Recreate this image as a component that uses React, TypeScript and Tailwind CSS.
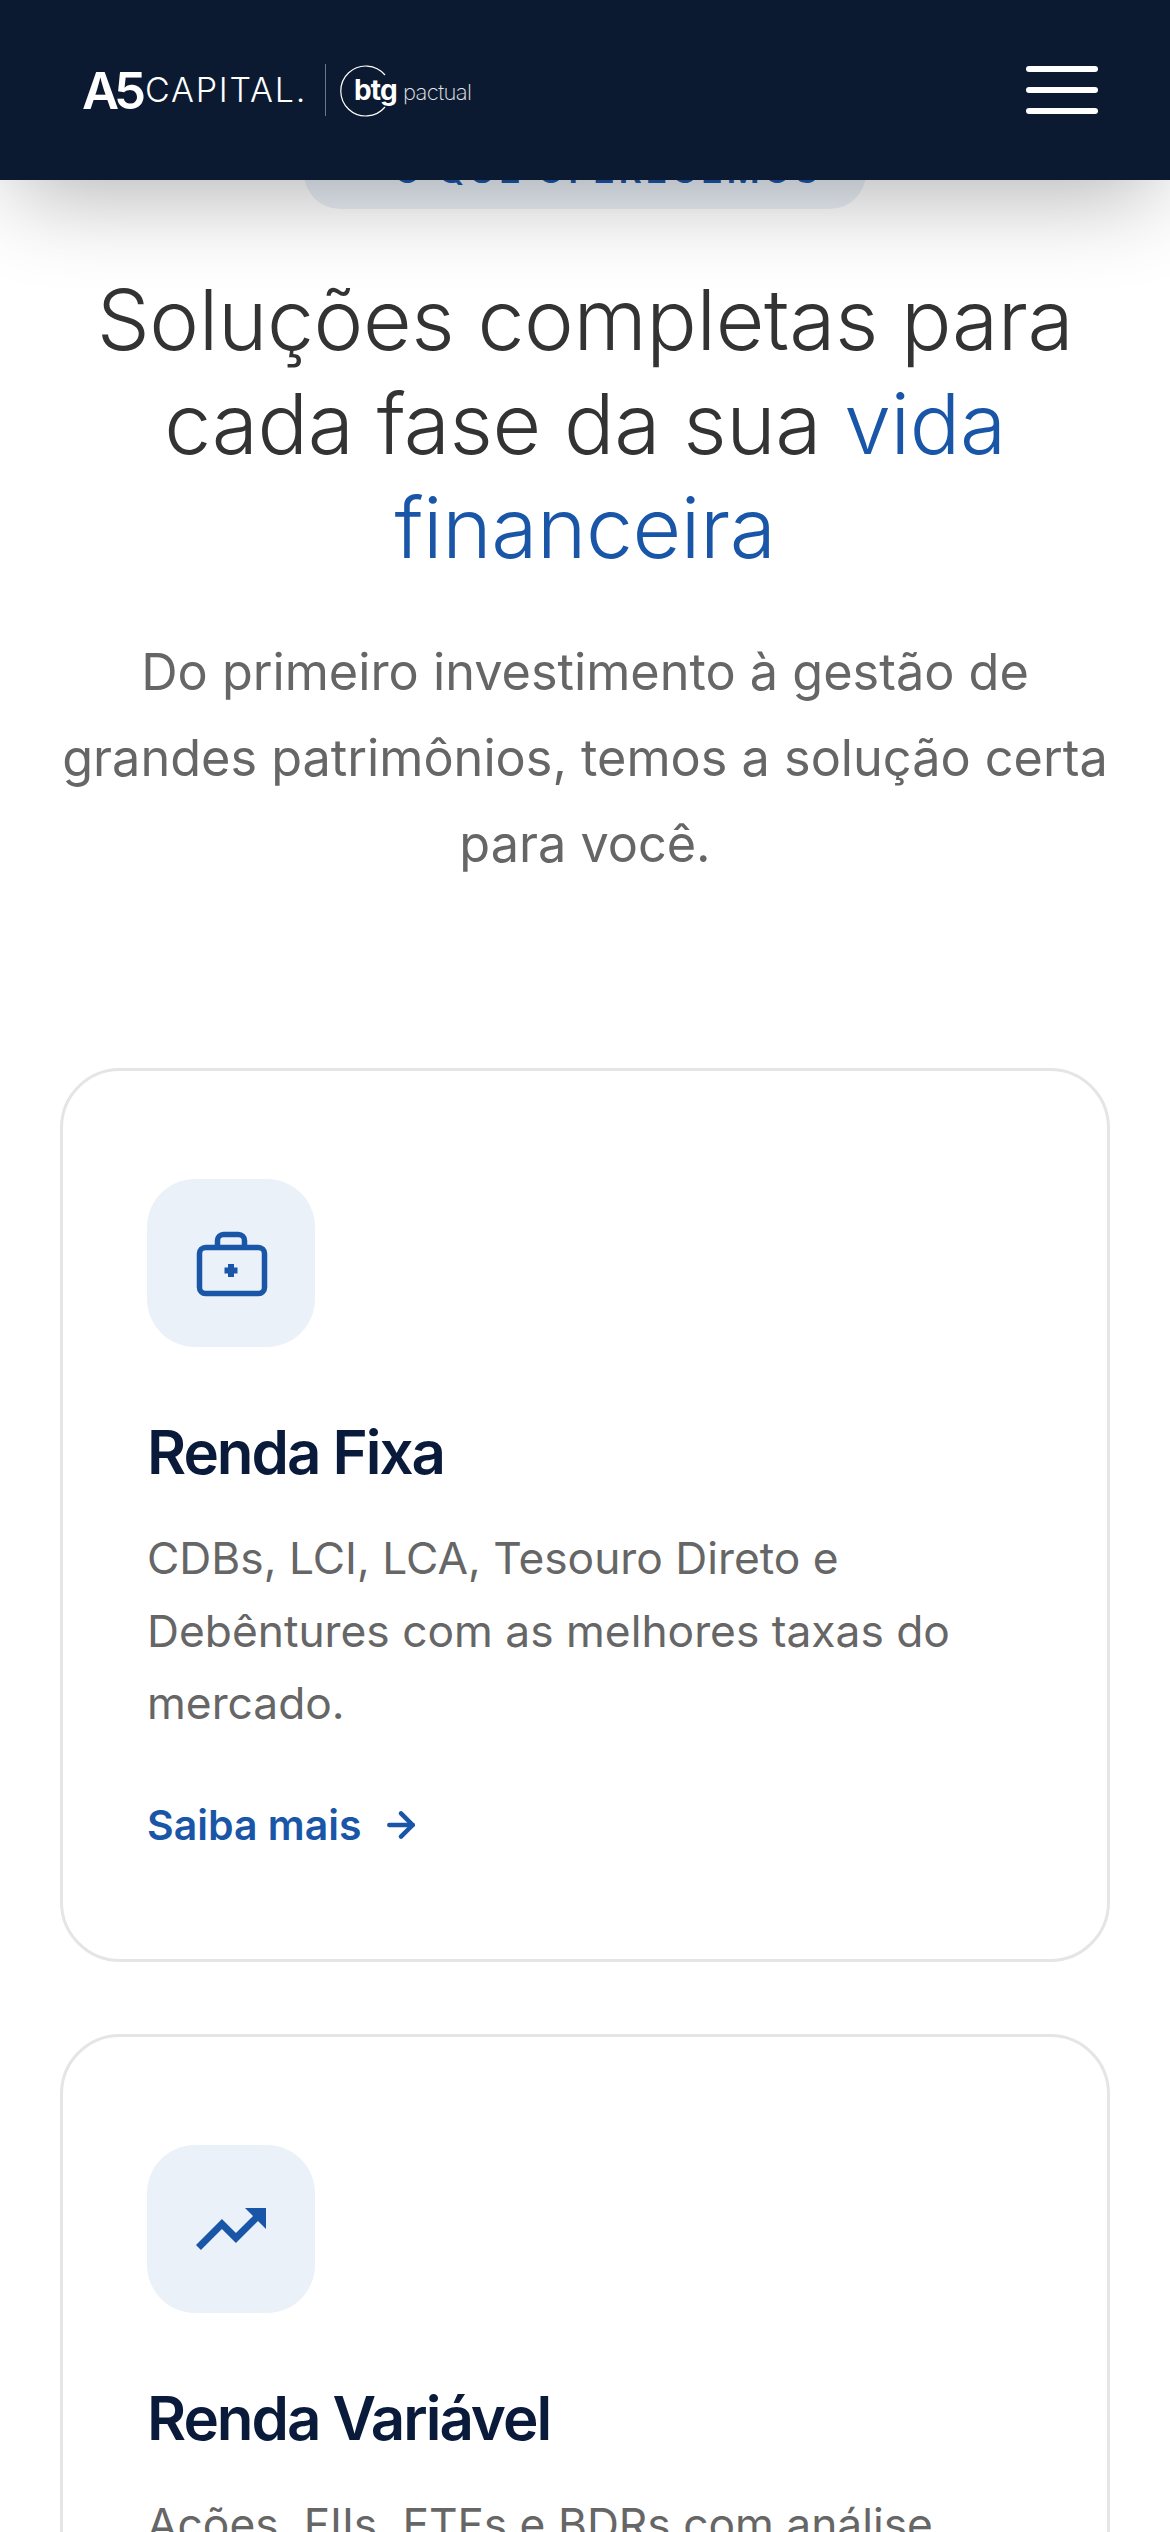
import { ArrowRight } from 'lucide-react';
import { MdTrendingUp } from 'react-icons/md';
import type { ReactNode } from 'react';

function CaseIcon() {
  return (
    <svg width="84" height="84" viewBox="0 0 84 84" fill="none" stroke="#1a56a8" strokeWidth="5.5">
      <rect x="10.5" y="26.5" width="65" height="46" rx="6" />
      <path d="M28.5 26V19.5a6 6 0 0 1 6-6h15a6 6 0 0 1 6 6V26" />
      <path d="M42 43v13M35.5 49.5h13" strokeWidth="6" />
    </svg>
  );
}

function Logo() {
  return (
    <div className="flex items-center text-white font-[Inter,sans-serif]">
      <span className="text-[51px] leading-none font-semibold tracking-[-5px] w-[63px]">A5</span>
      <span className="text-[34px] leading-none font-light tracking-[1.8px] w-[180px]">CAPITAL.</span>
      <span className="w-px h-[52px] bg-white/40" />
      <span className="relative flex items-baseline ml-[28px]">
        <svg className="absolute left-[-14px] top-[-11px]" width="52" height="52" viewBox="0 0 52 52" fill="none" stroke="#ffffff" strokeWidth="1.2">
          <path d="M45 10A25 25 0 1 0 45 42" />
        </svg>
        <span className="text-[28px] leading-none font-bold tracking-[-0.8px]">btg</span>
        <span className="text-[22px] leading-none font-extralight ml-[6px] tracking-[-0.6px] text-white/90">pactual</span>
      </span>
    </div>
  );
}

function Card({ icon, title, text }: { icon: ReactNode; title: string; text: string }) {
  return (
    <div className="rounded-[60px] border-[3px] border-[#e5e5e5] bg-white px-[84px] pt-[108px] pb-[104px]">
      <div className="w-[168px] h-[168px] rounded-[48px] bg-[#ebf1f9] flex items-center justify-center">
        {icon}
      </div>
      <h3 className="mt-[69px] text-[60px] leading-[72px] font-semibold tracking-[-2px] text-[#0a1a3a]">{title}</h3>
      <p className="mt-[34px] text-[44.3px] leading-[72.5px] text-[#666666]">{text}</p>
      <a className="mt-[55px] flex items-center gap-[19px] text-[41px] leading-[60px] font-semibold text-[#1a56a8]">
        Saiba mais
        <ArrowRight size={40} strokeWidth={2.75} />
      </a>
    </div>
  );
}

export default function App() {
  return (
    <div className="relative h-[2532px] overflow-hidden bg-white font-[Inter,sans-serif]">
      <header className="absolute inset-x-0 top-0 z-10 h-[180px] bg-[#0c1a31] flex items-center justify-between pl-[82px] pr-[72px] shadow-[0_30px_90px_-15px_rgba(0,0,0,0.3)]">
        <Logo />
        <button className="flex flex-col gap-[15px]">
          <span className="block w-[72px] h-[6px] rounded-full bg-white" />
          <span className="block w-[72px] h-[6px] rounded-full bg-white" />
          <span className="block w-[72px] h-[6px] rounded-full bg-white" />
        </button>
      </header>

      <main className="px-[60px] pt-[131px]">
        <div className="flex justify-center">
          <span className="h-[78px] w-[562px] pl-[45px] rounded-[36px] bg-[#ebf1f9] flex items-center justify-center text-[36px] font-semibold tracking-[3.6px] text-[#1a56a8]">
            O QUE OFERECEMOS
          </span>
        </div>

        <h2 className="mt-[59px] text-center text-[84px] leading-[104px] font-light tracking-[-0.4px] text-[#333333]">
          Soluções completas para cada fase da sua <span className="text-[#1a56a8]">vida financeira</span>
        </h2>
        <p className="mt-[49px] text-center text-[50.4px] leading-[86px] text-[#666666]">
          Do primeiro investimento à gestão de grandes patrimônios, temos a solução certa para você.
        </p>

        <div className="mt-[181px] flex flex-col gap-[72px]">
          <Card
            icon={<CaseIcon />}
            title="Renda Fixa"
            text="CDBs, LCI, LCA, Tesouro Direto e Debêntures com as melhores taxas do mercado."
          />
          <Card
            icon={<MdTrendingUp size={84} color="#1a56a8" />}
            title="Renda Variável"
            text="Ações, FIIs, ETFs e BDRs com análise especializada para sua carteira."
          />
        </div>
      </main>
    </div>
  );
}
